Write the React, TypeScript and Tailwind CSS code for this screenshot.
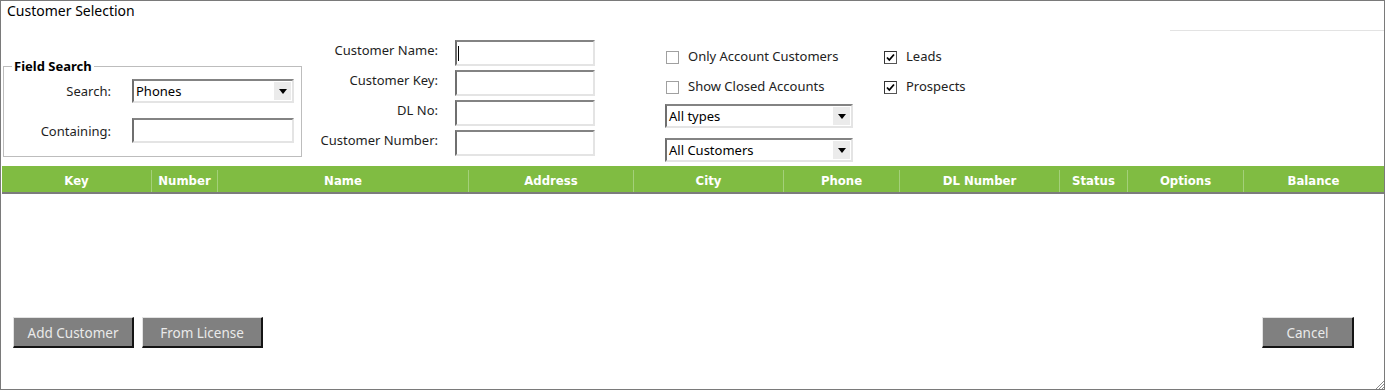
import type { ReactNode } from "react";

const columns = [
  { label: "Key", w: "w-[150px]" },
  { label: "Number", w: "w-[66px]" },
  { label: "Name", w: "w-[251px]" },
  { label: "Address", w: "w-[165px]" },
  { label: "City", w: "w-[150px]" },
  { label: "Phone", w: "w-[116px]" },
  { label: "DL Number", w: "w-[160px]" },
  { label: "Status", w: "w-[68px]" },
  { label: "Options", w: "w-[116px]" },
  { label: "Balance", w: "w-[139px]" },
];

const inset =
  "border-2 border-t-[#838383] border-l-[#6f6f6f] border-r-[#e4e4e4] border-b-[#e4e4e4] bg-white";

function TextBox({ className = "", caret = false }: { className?: string; caret?: boolean }) {
  return (
    <div className={`${inset} flex items-center ${className}`}>
      {caret && <span className="ml-[1px] h-[15px] w-px bg-black" />}
    </div>
  );
}

function Dropdown({ value, className = "" }: { value: string; className?: string }) {
  return (
    <div className={`${inset} flex items-stretch ${className}`}>
      <span className="flex-1 truncate pl-[2px] leading-[20px] text-black">{value}</span>
      <span className="my-[1px] mr-[1px] flex w-[17px] items-center justify-center bg-[#ebebeb]">
        <svg width="8" height="5" viewBox="0 0 8 5">
          <path d="M0 0h8L4 5z" fill="#000" />
        </svg>
      </span>
    </div>
  );
}

function Check({ checked, children }: { checked?: boolean; children: ReactNode }) {
  return (
    <div className="flex h-[30px] items-center gap-[9px] pt-[2px]">
      <span
        className={`flex h-[13px] w-[13px] items-center justify-center border bg-white ${
          checked ? "border-[#555] border-t-[#333] border-l-[#333]" : "border-[#a0a0a0]"
        }`}
      >
        {checked && (
          <svg width="9" height="9" viewBox="0 0 9 9">
            <path d="M1 4.5l2.3 2.5L8 1.5" fill="none" stroke="#000" strokeWidth="1.8" />
          </svg>
        )}
      </span>
      <span className="text-[#222]">{children}</span>
    </div>
  );
}

function Button({ children, className = "" }: { children: ReactNode; className?: string }) {
  return (
    <button
      className={`h-[31px] border border-t-[#e2e2e2] border-l-[#e2e2e2] border-r-2 border-b-2 border-r-[#141414] border-b-[#141414] bg-[#808080] pt-[2px] text-[13.5px] text-[#eaeaea] ${className}`}
    >
      {children}
    </button>
  );
}

export default function App() {
  return (
    <div className="h-[391px] w-[1386px] bg-white">
      <div className="relative flex h-[390px] w-[1385px] flex-col border border-[#7a7a7a] bg-white font-['Noto_Sans',sans-serif] text-[13px] text-[#1e1e1e]">
        {/* title bar */}
        <div className="flex h-[30px] justify-between">
          <div className="pl-[6px] pt-[1px] text-[14px] leading-[18px] text-black">Customer Selection</div>
          <div className="h-px w-[214px] self-end bg-[#e3e3e3]" />
        </div>

        {/* search controls */}
        <div className="flex h-[135px] items-start">
          <fieldset className="ml-[2px] mt-[27px] h-[99px] w-[299px] border border-[#bdbdbd] pr-[7px] pb-[12px]">
            <legend className="ml-[8px] px-[2px] text-[13px] font-bold leading-[16px] text-black">Field Search</legend>
            <div className="mt-[5px] grid grid-cols-[107px_162px] items-center gap-x-[21px] gap-y-[15px]">
              <span className="pt-[2px] text-right">Search:</span>
              <Dropdown value="Phones" className="h-[24px]" />
              <span className="pt-[2px] text-right">Containing:</span>
              <TextBox className="h-[25px]" />
            </div>
          </fieldset>

          <div className="ml-[16px] mt-[9px] grid grid-cols-[120px_140px] items-center gap-x-[17px] gap-y-[4px]">
            <span className="pb-[4px] text-right">Customer Name:</span>
            <TextBox className="h-[26px]" caret />
            <span className="pb-[4px] text-right">Customer Key:</span>
            <TextBox className="h-[26px]" />
            <span className="pb-[4px] text-right">DL No:</span>
            <TextBox className="h-[26px]" />
            <span className="pb-[4px] text-right">Customer Number:</span>
            <TextBox className="h-[26px]" />
          </div>

          <div className="ml-[70px] mt-[10px] flex w-[188px] flex-col">
            <div className="pl-[1px]">
              <Check>Only Account Customers</Check>
              <Check>Show Closed Accounts</Check>
            </div>
            <Dropdown value="All types" className="mt-[3px] h-[24px]" />
            <Dropdown value="All Customers" className="mt-[10px] h-[24px]" />
          </div>

          <div className="ml-[31px] mt-[10px] flex flex-col">
            <Check checked>Leads</Check>
            <Check checked>Prospects</Check>
          </div>
        </div>

        {/* grid header */}
        <div className="ml-px flex h-[28px] border-b-2 border-[#7c7c7c] bg-[#80bc42] pt-[4px] font-['DejaVu_Sans_Condensed','DejaVu_Sans',sans-serif] text-[13px] font-bold text-white [font-stretch:condensed]">
          {columns.map((c, i) => (
            <div
              key={c.label}
              className={`${c.w} flex items-center justify-center ${
                i < columns.length - 1 ? "border-r border-[#a4d07a]" : ""
              }`}
            >
              {c.label}
            </div>
          ))}
        </div>

        {/* grid body */}
        <div className="flex-1" />

        {/* buttons */}
        <div className="flex items-center gap-[8px] pb-[41px] pl-[12px] pr-[30px]">
          <Button className="w-[121px]">Add Customer</Button>
          <Button className="w-[121px]">From License</Button>
          <div className="flex-1" />
          <Button className="w-[92px]">Cancel</Button>
        </div>

        <svg className="absolute bottom-0 right-0" width="10" height="10" viewBox="0 0 10 10">
          <path d="M10 2L2 10M10 5L5 10M10 8L8 10" stroke="#8a8a8a" strokeWidth="1" />
        </svg>
      </div>
    </div>
  );
}
